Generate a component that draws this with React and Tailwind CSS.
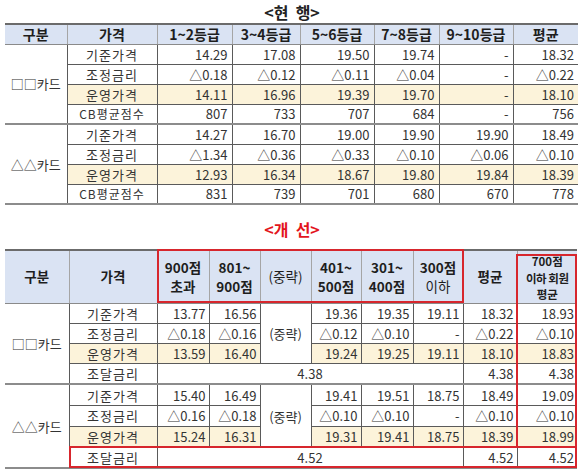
import React from 'react';

const current = [
  {
    name: '□□카드',
    rows: [
      ['기준가격', '14.29', '17.08', '19.50', '19.74', '-', '18.32'],
      ['조정금리', '△0.18', '△0.12', '△0.11', '△0.04', '-', '△0.22'],
      ['운영가격', '14.11', '16.96', '19.39', '19.70', '-', '18.10'],
      ['CB평균점수', '807', '733', '707', '684', '-', '756'],
    ],
  },
  {
    name: '△△카드',
    rows: [
      ['기준가격', '14.27', '16.70', '19.00', '19.90', '19.90', '18.49'],
      ['조정금리', '△1.34', '△0.36', '△0.33', '△0.10', '△0.06', '△0.10'],
      ['운영가격', '12.93', '16.34', '18.67', '19.80', '19.84', '18.39'],
      ['CB평균점수', '831', '739', '701', '680', '670', '778'],
    ],
  },
];

const improved = [
  {
    name: '□□카드',
    rows: [
      ['기준가격', ['13.77', '16.56'], ['19.36', '19.35', '19.11'], '18.32', '18.93'],
      ['조정금리', ['△0.18', '△0.16'], ['△0.12', '△0.10', '-'], '△0.22', '△0.10'],
      ['운영가격', ['13.59', '16.40'], ['19.24', '19.25', '19.11'], '18.10', '18.83'],
    ],
    fund: '4.38',
  },
  {
    name: '△△카드',
    rows: [
      ['기준가격', ['15.40', '16.49'], ['19.41', '19.51', '18.75'], '18.49', '19.09'],
      ['조정금리', ['△0.16', '△0.18'], ['△0.10', '△0.10', '-'], '△0.10', '△0.10'],
      ['운영가격', ['15.24', '16.31'], ['19.31', '19.41', '18.75'], '18.39', '18.99'],
    ],
    fund: '4.52',
  },
];

const topHead = ['구분', '가격', '1~2등급', '3~4등급', '5~6등급', '7~8등급', '9~10등급', '평균'];

function CurrentTable() {
  return (
    <table className="ml-[5px] w-[573px] table-fixed border-collapse text-[13px] leading-none">
      <colgroup>
        <col className="w-[62px]" />
        <col className="w-[90px]" />
        <col className="w-[75px]" />
        <col className="w-[68px]" />
        <col className="w-[74px]" />
        <col className="w-[65px]" />
        <col className="w-[74px]" />
        <col className="w-[65px]" />
      </colgroup>
      <thead>
        <tr className="h-[20px] bg-[#dae3f3]">
          {topHead.map((h, i) => (
            <th
              key={h}
              className={`border-t-2 border-t-[#6b6b6b] border-b border-b-[#8a8a8a] text-[14px] font-bold text-[#1e1e1e] ${i < 7 ? 'border-r border-r-[#a5a5a5]' : ''}`}
            >
              {h}
            </th>
          ))}
        </tr>
      </thead>
      <tbody>
        {current.map((g) =>
          g.rows.map((r, i) => {
            const last = i === 3;
            const yellow = r[0] === '운영가격';
            const rowB = last ? 'border-b-2 border-b-[#8c8c8c]' : 'border-b border-b-[#5a5a5a]';
            return (
              <tr key={g.name + r[0]} className="h-[20px]">
                {i === 0 && (
                  <td rowSpan={4} className="border-r border-r-[#5a5a5a] border-b-2 border-b-[#8c8c8c] bg-white text-center text-[13px] text-[#333]">
                    {g.name}
                  </td>
                )}
                <td className={`border-r border-r-[#5a5a5a] text-center tracking-[1px] text-[#333] ${rowB} ${yellow ? 'bg-[#fcf3da]' : ''} ${r[0] === 'CB평균점수' ? 'text-[12px] tracking-[0px]' : ''}`}>
                  {r[0]}
                </td>
                {r.slice(1).map((v, j) => (
                  <td
                    key={j}
                    className={`pr-[4px] text-right text-[#333] ${rowB} ${yellow ? 'bg-[#fcf3da]' : ''} ${j < 5 ? 'border-r border-r-[#5a5a5a]' : ''}`}
                  >
                    {v}
                  </td>
                ))}
              </tr>
            );
          })
        )}
      </tbody>
    </table>
  );
}

function HeadCell({ top, bottom, topBold = true, bottomBold = true, last = false }) {
  return (
    <th className={`border-t-2 border-t-[#6b6b6b] border-b border-b-[#8a8a8a] text-[13.5px] leading-[19px] text-[#1e1e1e] ${last ? '' : 'border-r border-r-[#a5a5a5]'}`}>
      <div className={topBold ? 'font-bold' : 'font-normal'}>{top}</div>
      {bottom && <div className={bottomBold ? 'font-bold' : 'font-normal'}>{bottom}</div>}
    </th>
  );
}

function ImprovedTable() {
  return (
    <div className="relative ml-[5px] w-[572px]">
      <table className="w-[572px] table-fixed border-collapse text-[13px] leading-none">
        <colgroup>
          <col className="w-[64px]" />
          <col className="w-[88px]" />
          <col className="w-[52px]" />
          <col className="w-[51px]" />
          <col className="w-[51px]" />
          <col className="w-[50px]" />
          <col className="w-[52px]" />
          <col className="w-[50px]" />
          <col className="w-[54px]" />
          <col className="w-[60px]" />
        </colgroup>
        <thead>
          <tr className="h-[53px] bg-[#dae3f3]">
            <HeadCell top="구분" />
            <HeadCell top="가격" />
            <HeadCell top="900점" bottom="초과" />
            <HeadCell top="801~" bottom="900점" />
            <HeadCell top="(중략)" topBold={false} />
            <HeadCell top="401~" bottom="500점" />
            <HeadCell top="301~" bottom="400점" />
            <HeadCell top="300점" bottom="이하" bottomBold={false} />
            <HeadCell top="평균" />
            <th className="border-t-2 border-t-[#6b6b6b] border-b border-b-[#8a8a8a] pt-[2px] text-[11.5px] font-bold leading-[16.6px] text-[#1e1e1e]">
              <div>700점</div>
              <div className="whitespace-nowrap tracking-[-0.5px]">이하 회원</div>
              <div>평균</div>
            </th>
          </tr>
        </thead>
        <tbody>
          {improved.map((g, gi) => (
            <React.Fragment key={g.name}>
              {g.rows.map((r, i) => {
                const yellow = r[0] === '운영가격';
                const bg = yellow ? 'bg-[#fcf3da]' : '';
                const h = gi === 0 ? 'h-[20px]' : 'h-[21px]';
                const cell = `pr-[3px] text-right text-[#333] border-b border-b-[#5a5a5a] border-r border-r-[#5a5a5a] ${bg}`;
                return (
                  <tr key={r[0]} className={h}>
                    {i === 0 && (
                      <td rowSpan={4} className="border-r border-r-[#5a5a5a] border-b-2 border-b-[#8c8c8c] bg-white text-center text-[#333]">
                        {g.name}
                      </td>
                    )}
                    <td className={`border-r border-r-[#5a5a5a] border-b border-b-[#5a5a5a] text-center tracking-[1px] text-[#333] ${bg}`}>
                      {r[0]}
                    </td>
                    {r[1].map((v) => (
                      <td key={v + 'a'} className={cell}>{v}</td>
                    ))}
                    {i === 0 && (
                      <td rowSpan={3} className="border-r border-r-[#5a5a5a] border-b border-b-[#5a5a5a] bg-white text-center text-[#333]">
                        (중략)
                      </td>
                    )}
                    {r[2].map((v, k) => (
                      <td key={k} className={cell}>{v}</td>
                    ))}
                    <td className={cell}>{r[3]}</td>
                    <td className={`pr-[3px] text-right text-[#333] border-b border-b-[#5a5a5a] ${bg}`}>{r[4]}</td>
                  </tr>
                );
              })}
              <tr className="h-[21px]">
                <td className="border-r border-r-[#5a5a5a] border-b-2 border-b-[#8c8c8c] text-center tracking-[1px] text-[#333]">조달금리</td>
                <td colSpan={6} className="border-r border-r-[#5a5a5a] border-b-2 border-b-[#8c8c8c] text-center text-[#333]">{g.fund}</td>
                <td className="border-r border-r-[#5a5a5a] border-b-2 border-b-[#8c8c8c] pr-[3px] text-right text-[#333]">{g.fund}</td>
                <td className="border-b-2 border-b-[#8c8c8c] pr-[3px] text-right text-[#333]">{g.fund}</td>
              </tr>
            </React.Fragment>
          ))}
        </tbody>
      </table>
      {/* red highlight boxes */}
      <div className="pointer-events-none absolute left-[152px] top-0 h-[54px] w-[307px] border-2 border-[#d7262d]" />
      <div className="pointer-events-none absolute left-[511px] top-[5px] h-[194px] w-[61px] border-2 border-[#d7262d]" />
      <div className="pointer-events-none absolute left-[64px] top-[197px] h-[22px] w-[508px] border-2 border-[#d7262d]" />
    </div>
  );
}

export default function App() {
  return (
    <div className="h-[469px] w-[580px] overflow-hidden bg-white font-['Noto_Sans_CJK_KR','Noto_Sans',sans-serif] text-[#333]">
      <div className="flex h-[23px] items-center justify-center pl-[4px] text-[16px] font-bold text-[#222]">
        &lt;현&nbsp;&nbsp;행&gt;
      </div>
      <CurrentTable />
      <div className="flex h-[44px] items-center justify-center pl-[4px] pt-[3px] text-[16px] font-bold text-[#e3141c]">
        &lt;개&nbsp;&nbsp;선&gt;
      </div>
      <ImprovedTable />
    </div>
  );
}
